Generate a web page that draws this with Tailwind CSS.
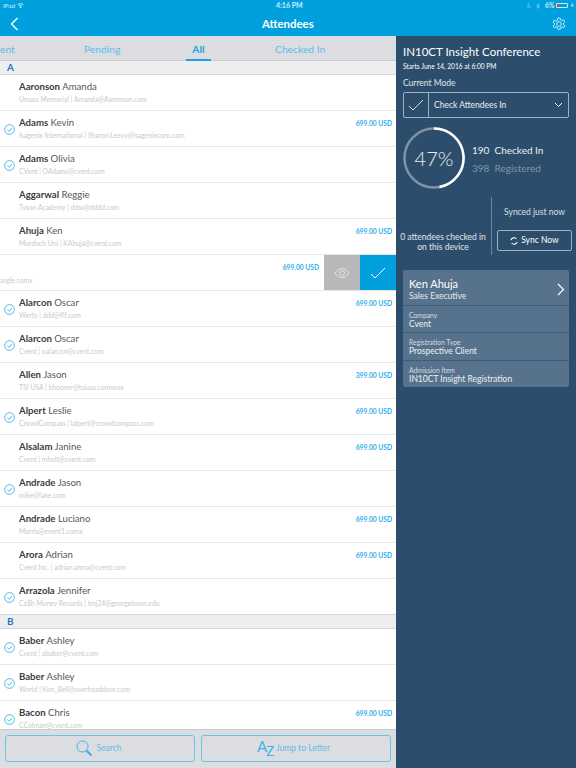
<!DOCTYPE html>
<html>
  <head>
    <meta charset="UTF-8" />
    <meta name="viewport" content="width=device-width, initial-scale=1.0" />
    <title>Attendees</title>
    <script src="https://cdn.jsdelivr.net/npm/@tailwindcss/browser@4"></script>
  </head>
  <body class="w-[576px] h-[768px] overflow-hidden bg-[#2c4e6c] font-['Lato','Open_Sans',sans-serif] text-white">
    <!-- top bar -->
    <header class="h-9 bg-[#00a0de] flex flex-col">
      <div class="h-[11px] flex items-center justify-between pl-[3px] pr-[2px] text-[6.500px] text-white/80 relative">
        <span class="flex items-center gap-[2px]">iPad
          <svg class="w-[7px] h-[5px]" viewBox="0 0 14 10" fill="none" stroke="white" stroke-width="1.500"><path d="M1 3.500c3.500-3 8.500-3 12 0M3.500 6c2-1.700 5-1.700 7 0" /><circle cx="7" cy="8.500" r="1" fill="white" /></svg>
        </span>
        <span class="absolute left-[276px] text-[7px] font-bold">4:16 PM</span>
        <span class="flex items-center gap-[2px]">
          <svg class="w-[4px] h-[5px]" viewBox="0 0 8 10" fill="none" stroke="white" stroke-opacity="0.6"><path d="M3 1a4 4 0 1 0 4 6A5 5 0 0 1 3 1z" /></svg>
          <svg class="w-[4px] h-[6px] ml-[3px]" viewBox="0 0 8 12" fill="none" stroke="white" stroke-opacity="0.6"><path d="m1 3 6 5.500L4 11V1l3 2.500L1 9" /></svg>
          <span class="ml-[3px] font-bold">6%</span>
          <span class="w-[12px] h-[5px] border border-white/80 rounded-[1px] flex"><span class="w-[2px] bg-red-500"></span></span>
          <span class="font-bold">+</span>
        </span>
      </div>
      <div class="flex-1 flex items-center justify-between px-[10px]">
        <svg class="w-[9px] h-[14px]" viewBox="0 0 9 14" fill="none" stroke="white" stroke-width="1.400"><path d="M7.500 1 1.500 7l6 6" /></svg>
        <span class="text-[11.400px] font-bold absolute left-[262px]">Attendees</span>
        <svg class="w-[14px] h-[14px]" viewBox="0 0 24 24" fill="none" stroke="white" stroke-width="1.300"><circle cx="12" cy="12" r="4" /><path d="M10 2h4l.7 3 2.600 1.100 2.700-1.600 2 3.400-2.200 2 .1 3-.1.200 2.200 2-2 3.400-2.700-1.600-2.600 1.100-.7 3h-4l-.7-3-2.600-1.100-2.700 1.600-2-3.400 2.200-2V11L1.900 8.900l2-3.400 2.700 1.600L9.300 6z" /></svg>
      </div>
    </header>

    <div class="flex h-[732px]">
      <!-- attendee list -->
      <main class="w-[396px] bg-white flex flex-col text-[#55585c]">
        <nav class="h-[25px] bg-[#dcdde0] border-b border-[#c9cacd] relative text-[10.300px] text-[#5cbde8] shrink-0">
          <span class="absolute left-0 top-[6px]">ent</span>
          <span class="absolute left-[84px] top-[6px]">Pending</span>
          <span class="absolute left-[186px] top-0 h-[25px] w-[25px] text-center pt-[6px] font-bold text-[#1ba3e0] border-b-[2px] border-[#1ba3e0]">All</span>
          <span class="absolute left-[275px] top-[6px]">Checked In</span>
        </nav>
        <div class="flex-1 overflow-hidden">
          <div class="h-[14px] bg-[#eeeef0] border-b border-[#d5d6d8] pl-[7px] text-[10px] font-bold leading-[13px] text-[#1f77bd]">A</div>
          <div class="h-9 border-b border-[#e6e6e6] relative pl-[19px] pt-[5px]"><p class="text-[9.600px] leading-[14px]"><b class="text-[#3a3d42]">Aaronson</b> Amanda</p><p class="text-[6.800px] leading-[10px] text-[#c9c9c9]">Umass Memorial | Amanda@Aaronson.com</p></div>
          <div class="h-9 border-b border-[#e6e6e6] relative pl-[19px] pt-[5px]"><svg class="absolute left-1 top-[13px] w-[11px] h-[11px]" viewBox="0 0 12 12" fill="none" stroke="#38b6ea"><circle cx="6" cy="6" r="5.300" /><path d="m3.500 6 2 2 3-3.500" /></svg><span class="absolute right-1 top-[7px] text-[6.700px] font-bold text-[#2cb0e8]">699.00 USD</span><p class="text-[9.600px] leading-[14px]"><b class="text-[#3a3d42]">Adams</b> Kevin</p><p class="text-[6.800px] leading-[10px] text-[#c9c9c9]">Isagenix International | Sharon.Leevy@isagenixcorp.com</p></div>
          <div class="h-9 border-b border-[#e6e6e6] relative pl-[19px] pt-[5px]"><svg class="absolute left-1 top-[13px] w-[11px] h-[11px]" viewBox="0 0 12 12" fill="none" stroke="#38b6ea"><circle cx="6" cy="6" r="5.300" /><path d="m3.500 6 2 2 3-3.500" /></svg><p class="text-[9.600px] leading-[14px]"><b class="text-[#3a3d42]">Adams</b> Olivia</p><p class="text-[6.800px] leading-[10px] text-[#c9c9c9]">CVent | OAdams@cvent.com</p></div>
          <div class="h-9 border-b border-[#e6e6e6] relative pl-[19px] pt-[5px]"><p class="text-[9.600px] leading-[14px]"><b class="text-[#3a3d42]">Aggarwal</b> Reggie</p><p class="text-[6.800px] leading-[10px] text-[#c9c9c9]">Tyson Academy | ddss@dddd.com</p></div>
          <div class="h-9 border-b border-[#e6e6e6] relative pl-[19px] pt-[5px]"><span class="absolute right-1 top-[7px] text-[6.700px] font-bold text-[#2cb0e8]">699.00 USD</span><p class="text-[9.600px] leading-[14px]"><b class="text-[#3a3d42]">Ahuja</b> Ken</p><p class="text-[6.800px] leading-[10px] text-[#c9c9c9]">Murdoch Uni | KAhuja@cvent.com</p></div>
          <!-- swiped row -->
          <div class="h-9 border-b border-[#e6e6e6] relative pt-[19px] overflow-hidden">
            <p class="text-[6.800px] leading-[12px] text-[#c9c9c9] -ml-[5px]">google.comx</p>
            <span class="absolute right-[77px] top-[7px] text-[6.700px] font-bold text-[#2cb0e8]">699.00 USD</span>
            <div class="absolute right-0 top-0 h-[35px] flex">
              <div class="w-9 bg-[#b7b8ba] flex items-center justify-center"><svg class="w-4 h-3" viewBox="0 0 16 12" fill="none" stroke="#e4e4e4"><path d="M1 6c3.500-6 10.500-6 14 0-3.500 6-10.500 6-14 0z" /><circle cx="8" cy="6" r="2.500" /></svg></div>
              <div class="w-9 bg-[#00a0de] flex items-center justify-center"><svg class="w-4 h-3" viewBox="0 0 16 12" fill="none" stroke="white"><path d="m1 7 4 4 10-10" /></svg></div>
            </div>
          </div>
          <div class="h-9 border-b border-[#e6e6e6] relative pl-[19px] pt-[5px]"><svg class="absolute left-1 top-[13px] w-[11px] h-[11px]" viewBox="0 0 12 12" fill="none" stroke="#38b6ea"><circle cx="6" cy="6" r="5.300" /><path d="m3.500 6 2 2 3-3.500" /></svg><span class="absolute right-1 top-[7px] text-[6.700px] font-bold text-[#2cb0e8]">699.00 USD</span><p class="text-[9.600px] leading-[14px]"><b class="text-[#3a3d42]">Alarcon</b> Oscar</p><p class="text-[6.800px] leading-[10px] text-[#c9c9c9]">Werty | ddd@fff.com</p></div>
          <div class="h-9 border-b border-[#e6e6e6] relative pl-[19px] pt-[5px]"><svg class="absolute left-1 top-[13px] w-[11px] h-[11px]" viewBox="0 0 12 12" fill="none" stroke="#38b6ea"><circle cx="6" cy="6" r="5.300" /><path d="m3.500 6 2 2 3-3.500" /></svg><p class="text-[9.600px] leading-[14px]"><b class="text-[#3a3d42]">Alarcon</b> Oscar</p><p class="text-[6.800px] leading-[10px] text-[#c9c9c9]">Cvent | oalarcon@cvent.com</p></div>
          <div class="h-9 border-b border-[#e6e6e6] relative pl-[19px] pt-[5px]"><span class="absolute right-1 top-[7px] text-[6.700px] font-bold text-[#2cb0e8]">399.00 USD</span><p class="text-[9.600px] leading-[14px]"><b class="text-[#3a3d42]">Allen</b> Jason</p><p class="text-[6.800px] leading-[10px] text-[#c9c9c9]">TSI USA | bhoover@tsiusa.comxxxx</p></div>
          <div class="h-9 border-b border-[#e6e6e6] relative pl-[19px] pt-[5px]"><svg class="absolute left-1 top-[13px] w-[11px] h-[11px]" viewBox="0 0 12 12" fill="none" stroke="#38b6ea"><circle cx="6" cy="6" r="5.300" /><path d="m3.500 6 2 2 3-3.500" /></svg><span class="absolute right-1 top-[7px] text-[6.700px] font-bold text-[#2cb0e8]">699.00 USD</span><p class="text-[9.600px] leading-[14px]"><b class="text-[#3a3d42]">Alpert</b> Leslie</p><p class="text-[6.800px] leading-[10px] text-[#c9c9c9]">CrowdCompass | lalpert@crowdcompass.com</p></div>
          <div class="h-9 border-b border-[#e6e6e6] relative pl-[19px] pt-[5px]"><span class="absolute right-1 top-[7px] text-[6.700px] font-bold text-[#2cb0e8]">699.00 USD</span><p class="text-[9.600px] leading-[14px]"><b class="text-[#3a3d42]">Alsalam</b> Janine</p><p class="text-[6.800px] leading-[10px] text-[#c9c9c9]">Cvent | mholt@cvent.com</p></div>
          <div class="h-9 border-b border-[#e6e6e6] relative pl-[19px] pt-[5px]"><svg class="absolute left-1 top-[13px] w-[11px] h-[11px]" viewBox="0 0 12 12" fill="none" stroke="#38b6ea"><circle cx="6" cy="6" r="5.300" /><path d="m3.500 6 2 2 3-3.500" /></svg><p class="text-[9.600px] leading-[14px]"><b class="text-[#3a3d42]">Andrade</b> Jason</p><p class="text-[6.800px] leading-[10px] text-[#c9c9c9]">mike@fake.com</p></div>
          <div class="h-9 border-b border-[#e6e6e6] relative pl-[19px] pt-[5px]"><span class="absolute right-1 top-[7px] text-[6.700px] font-bold text-[#2cb0e8]">699.00 USD</span><p class="text-[9.600px] leading-[14px]"><b class="text-[#3a3d42]">Andrade</b> Luciano</p><p class="text-[6.800px] leading-[10px] text-[#c9c9c9]">Morris@event1.comx</p></div>
          <div class="h-9 border-b border-[#e6e6e6] relative pl-[19px] pt-[5px]"><span class="absolute right-1 top-[7px] text-[6.700px] font-bold text-[#2cb0e8]">699.00 USD</span><p class="text-[9.600px] leading-[14px]"><b class="text-[#3a3d42]">Arora</b> Adrian</p><p class="text-[6.800px] leading-[10px] text-[#c9c9c9]">Cvent Inc. | adrian.arora@cvent.com</p></div>
          <div class="h-[35px] relative pl-[19px] pt-[5px]"><svg class="absolute left-1 top-[13px] w-[11px] h-[11px]" viewBox="0 0 12 12" fill="none" stroke="#38b6ea"><circle cx="6" cy="6" r="5.300" /><path d="m3.500 6 2 2 3-3.500" /></svg><p class="text-[9.600px] leading-[14px]"><b class="text-[#3a3d42]">Arrazola</b> Jennifer</p><p class="text-[6.800px] leading-[10px] text-[#c9c9c9]">Ca$h Money Records | tmj24@georgetown.edu</p></div>
          <div class="h-[15px] bg-[#eeeef0] border-y border-[#d5d6d8] pl-[7px] text-[10px] font-bold leading-[13px] text-[#1f77bd]">B</div>
          <div class="h-9 border-b border-[#e6e6e6] relative pl-[19px] pt-[5px]"><svg class="absolute left-1 top-[13px] w-[11px] h-[11px]" viewBox="0 0 12 12" fill="none" stroke="#38b6ea"><circle cx="6" cy="6" r="5.300" /><path d="m3.500 6 2 2 3-3.500" /></svg><p class="text-[9.600px] leading-[14px]"><b class="text-[#3a3d42]">Baber</b> Ashley</p><p class="text-[6.800px] leading-[10px] text-[#c9c9c9]">Cvent | ababer@cvent.com</p></div>
          <div class="h-9 border-b border-[#e6e6e6] relative pl-[19px] pt-[5px]"><svg class="absolute left-1 top-[13px] w-[11px] h-[11px]" viewBox="0 0 12 12" fill="none" stroke="#38b6ea"><circle cx="6" cy="6" r="5.300" /><path d="m3.500 6 2 2 3-3.500" /></svg><p class="text-[9.600px] leading-[14px]"><b class="text-[#3a3d42]">Baber</b> Ashley</p><p class="text-[6.800px] leading-[10px] text-[#c9c9c9]">World | Kim_Bell@overheaddoor.com</p></div>
          <div class="h-9 relative pl-[19px] pt-[5px]"><svg class="absolute left-1 top-[13px] w-[11px] h-[11px]" viewBox="0 0 12 12" fill="none" stroke="#38b6ea"><circle cx="6" cy="6" r="5.300" /><path d="m3.500 6 2 2 3-3.500" /></svg><span class="absolute right-1 top-[7px] text-[6.700px] font-bold text-[#2cb0e8]">699.00 USD</span><p class="text-[9.600px] leading-[14px]"><b class="text-[#3a3d42]">Bacon</b> Chris</p><p class="text-[6.800px] leading-[10px] text-[#c9c9c9]">CColman@cvent.com</p></div>
        </div>
        <!-- bottom bar -->
        <footer class="h-[39px] shrink-0 bg-[#dcdde0] border-t border-[#c9cacd] flex gap-[6px] px-[5px] pt-[5px] pb-[6px] text-[8.500px] text-[#5cbde8]">
          <div class="w-[190px] border-[1.500px] border-[#6cc3e8] rounded-[3px] flex items-center justify-center gap-[3px] pr-[2px]">
            <svg class="w-[17px] h-[17px]" viewBox="0 0 17 17" fill="none" stroke="#38b6ea"><circle cx="6.500" cy="6.500" r="5.500" /><path d="m10.500 10.500 5 5" stroke-width="2.200" /></svg>Search
          </div>
          <div class="w-[190px] border-[1.500px] border-[#6cc3e8] rounded-[3px] flex items-center justify-center gap-[2px] pr-[5px]">
            <span class="text-[15px] leading-[15px] text-[#38b6ea] -mt-[3px]">A<span class="text-[13px] relative top-[4px] -ml-[1px]">Z</span></span>Jump to Letter
          </div>
        </footer>
      </main>

      <!-- event panel -->
      <aside class="w-[180px] px-[7px] pt-[8px]">
        <h1 class="text-[11.500px] leading-[15px]">IN10CT Insight Conference</h1>
        <p class="text-[6.600px] leading-[10px] mt-[2px]">Starts June 14, 2016 at 6:00 PM</p>
        <p class="text-[8.500px] leading-[11px] mt-[7px] text-white/85">Current Mode</p>
        <div class="mt-[3px] h-[26px] border border-[#9fb1c2] rounded-[2px] flex items-center text-[8.500px] text-white/90">
          <div class="w-[25px] h-full border-r border-[#9fb1c2] flex items-center justify-center"><svg class="w-4 h-3" viewBox="0 0 16 12" fill="none" stroke="white" stroke-width="0.800"><path d="m1 7 4 4 10-10" /></svg></div>
          <span class="ml-[5px] flex-1">Check Attendees In</span>
          <svg class="w-[9px] h-[6px] mr-[5px]" viewBox="0 0 9 6" fill="none" stroke="white"><path d="m1 1 3.500 3.500L8 1" /></svg>
        </div>
        <div class="mt-[9px] flex items-center gap-[7px]">
          <div class="relative w-[62px] h-[62px] flex items-center justify-center">
            <svg class="absolute inset-0" viewBox="0 0 62 62" fill="none" stroke-width="2.500"><circle cx="31" cy="31" r="29.500" stroke="#7e93a7" /><path d="M31 1.500A29.500 29.500 0 0 1 36.500 60" stroke="white" /></svg>
            <span class="text-[20px] font-light text-white/90">47%</span>
          </div>
          <div class="text-[10px] mt-[2px]">
            <p class="leading-[18px] text-white/90">190&nbsp; Checked In</p>
            <p class="leading-[18px] text-white/40">398&nbsp; Registered</p>
          </div>
        </div>
        <div class="mt-[8px] flex h-[58px]">
          <p class="w-[88px] shrink-0 -ml-[4px] self-end mb-[3px] text-center text-[8.500px] leading-[10px] text-white/85">0 attendees checked in on this device</p>
          <div class="w-px shrink-0 bg-[#6f8599] ml-[4px]"></div>
          <div class="ml-[5px] w-[75px] shrink-0 flex flex-col items-center">
            <p class="text-[8.500px] leading-[13px] mt-[9px] text-white/80">Synced just now</p>
            <div class="mt-[11px] w-[75px] h-[21px] border border-[#9fb1c2] rounded-[2px] flex items-center justify-center gap-[3px] text-[8.500px]">
              <svg class="w-2 h-2" viewBox="0 0 10 10" fill="none" stroke="white" stroke-width="1.300"><path d="M1 4a4 4 0 0 1 7-1.500M9 6a4 4 0 0 1-7 1.500" /></svg>Sync Now
            </div>
          </div>
        </div>
        <div class="mt-[15px] h-[117px] rounded-[2px] bg-[#56728c] divide-y divide-[#3d5c78] flex flex-col">
          <div class="h-[36px] shrink-0 px-[6px] pt-[7px] relative">
            <p class="text-[11px] leading-[14px]">Ken Ahuja</p>
            <p class="text-[8.500px] leading-[10px] text-white/85">Sales Executive</p>
            <svg class="absolute right-[4px] top-[13px] w-2 h-[13px]" viewBox="0 0 8 13" fill="none" stroke="white" stroke-width="1.200"><path d="m1 1 5.500 5.500L1 12" /></svg>
          </div>
          <div class="flex-1 px-[6px] pt-[5px]"><p class="text-[6.800px] leading-[8px] text-white/75">Company</p><p class="text-[8.500px] leading-[11px] text-white/90">Cvent</p></div>
          <div class="flex-1 px-[6px] pt-[5px]"><p class="text-[6.800px] leading-[8px] text-white/75">Registration Type</p><p class="text-[8.500px] leading-[11px] text-white/90">Prospective Client</p></div>
          <div class="flex-1 px-[6px] pt-[5px]"><p class="text-[6.800px] leading-[8px] text-white/75">Admission Item</p><p class="text-[8.500px] leading-[11px] text-white/90">IN10CT Insight Registration</p></div>
        </div>
      </aside>
    </div>
  </body>
</html>
